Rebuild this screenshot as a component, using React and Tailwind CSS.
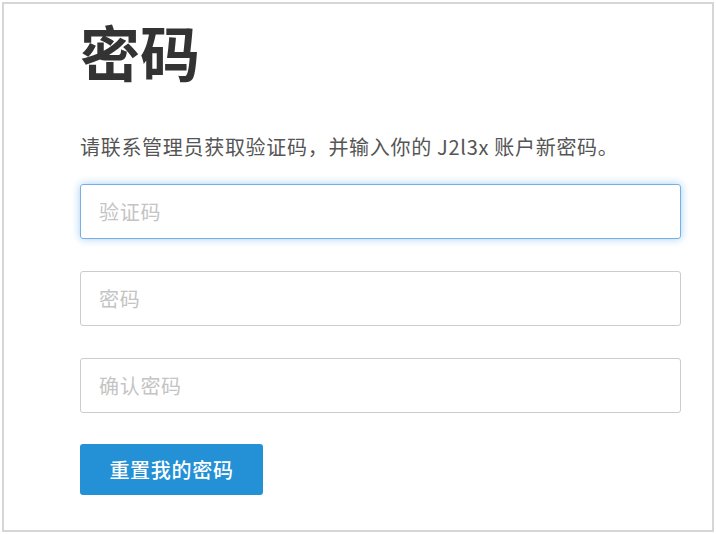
export default function App() {
  const font = { fontFamily: '"Noto Sans CJK SC", "Noto Sans", sans-serif' };
  return (
    <div className="w-[716px] h-[534px] bg-white p-[2px]" style={font}>
      <div className="h-full border-2 border-[#d6d6d6] pl-[76px] pr-[30px] pt-[7px]">
        <h1 className="text-[60px] leading-[80px] font-bold text-[#333]">密码</h1>
        <p className="mt-[42px] text-[20px] leading-[28px] tracking-[0.7px] text-[#555]">
          请联系管理员获取验证码，并输入你的 J2l3x 账户新密码。
        </p>
        <div className="mt-[23px] flex flex-col gap-[32px] w-[601px]">
          <input
            autoFocus
            placeholder="验证码"
            className="h-[55px] rounded-[3px] border border-[#74b0e6] px-[18px] text-[20px] tracking-[0.7px] text-[#333] placeholder:text-[#c4c4c4] outline-none shadow-[0_0_8px_rgba(102,175,233,0.6)]"
          />
          <input
            type="password"
            placeholder="密码"
            className="h-[55px] rounded-[3px] border border-[#ccc] px-[18px] text-[20px] tracking-[0.7px] text-[#333] placeholder:text-[#c4c4c4] outline-none"
          />
          <input
            type="password"
            placeholder="确认密码"
            className="h-[55px] rounded-[3px] border border-[#ccc] px-[18px] text-[20px] tracking-[0.7px] text-[#333] placeholder:text-[#c4c4c4] outline-none"
          />
        </div>
        <button className="mt-[31px] h-[51px] w-[183px] rounded-[3px] bg-[#2490d6] text-[20px] tracking-[0.7px] font-medium text-white">
          重置我的密码
        </button>
      </div>
    </div>
  );
}
